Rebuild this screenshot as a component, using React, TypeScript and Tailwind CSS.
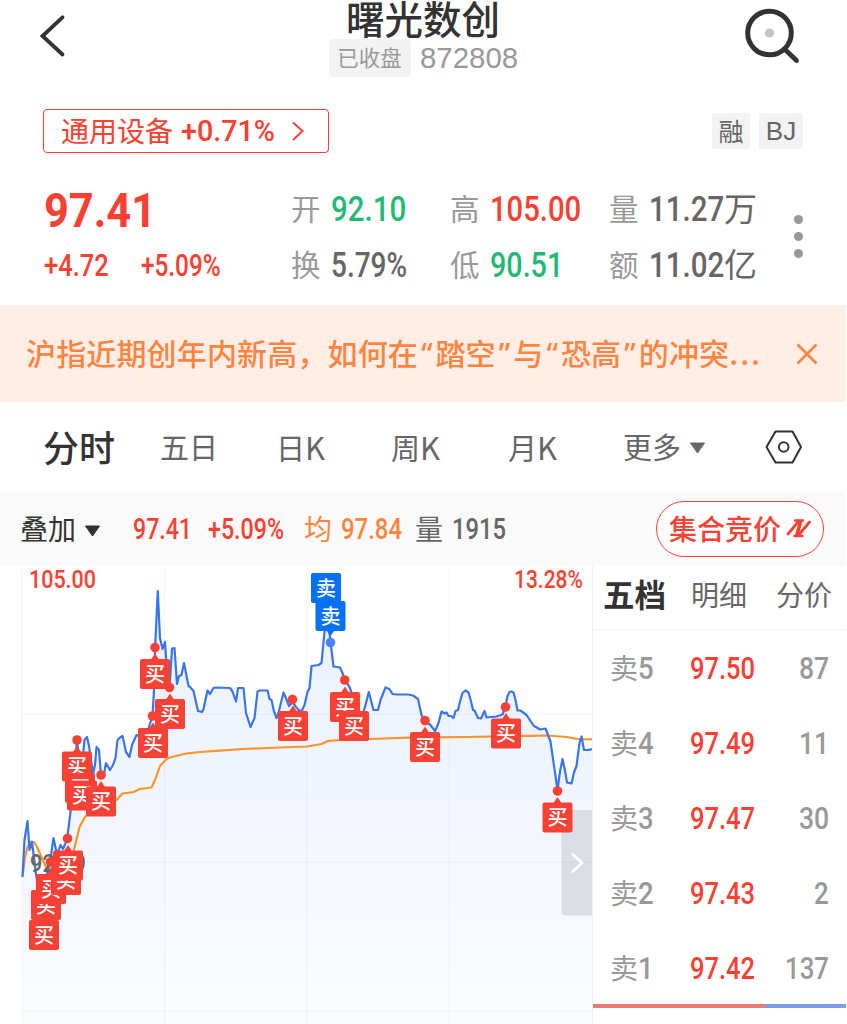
import React, {useLayoutEffect, useRef, useState} from 'react';

type FitProps = {
    w: number;
    className?: string;
    children: React.ReactNode;
};

// Squeezes a text run horizontally to the given width (condensed DIN look)
const Fit = ({w, className = '', children}: FitProps) => {
    const ref = useRef<HTMLSpanElement>(null);
    const [scale, setScale] = useState(1);

    useLayoutEffect(() => {
        if (ref.current && ref.current.offsetWidth) {
            setScale(w / ref.current.offsetWidth);
        }
    }, [w]);

    return (
        <span className={`block shrink-0 whitespace-nowrap leading-none ${className}`} style={{width: w}}>
            <span ref={ref} className="inline-block origin-left" style={{transform: `scaleX(${scale})`}}>
                {children}
            </span>
        </span>
    );
};

const Quote = ({children}: { children: React.ReactNode }) => (
    <span className="inline-block w-[17.5px] text-center font-['Noto_Sans'] leading-none tracking-normal">{children}</span>
);

const stats = [
    [
        {label: '开', value: '92.10', w: 75, color: 'text-[#1fba74]'},
        {label: '高', value: '105.00', w: 91, color: 'text-[#f94033]'},
        {label: '量', value: '11.27', unit: '万', w: 75, color: 'text-[#666666]'},
    ],
    [
        {label: '换', value: '5.79%', w: 76, color: 'text-[#666666]'},
        {label: '低', value: '90.51', w: 73, color: 'text-[#1fba74]'},
        {label: '额', value: '11.02', unit: '亿', w: 75, color: 'text-[#666666]'},
    ],
];

const asks = [
    {level: '5', price: '97.50', volume: '87', w: 30},
    {level: '4', price: '97.49', volume: '11', w: 30},
    {level: '3', price: '97.47', volume: '30', w: 30},
    {level: '2', price: '97.43', volume: '2', w: 15},
    {level: '1', price: '97.42', volume: '137', w: 44},
];

const priceLine = '22.5,877 24.5,840 27.5,821 29.5,850 32,842 34,858 36.5,878 41,892 46,878 50,862 53.5,838 56,850 58,852 60.5,845 63,849 67,840 71,808 77,740 81,775 84.5,740 87,737 89,746 93,774 95,765 96.5,747 99,750 101,776 104,774 106,763 110,770 113,765 115.5,758 117.5,740 119.5,738 122.5,736 126,752 129.5,757 132,745 136.5,735 140,736 146,736 152.5,716 154,690 155,650 157.8,591 160,638 162.5,649 165,642 166.5,665 169.5,687 171,665 172,648.5 174.5,648 177,684 179,676 181.5,675 184,663 188.5,686 190,687 193.5,691 198,711 202,712 203.5,709 207.5,690.5 210,694 213.5,688 216,687.5 230,688 232.5,691.5 236,701.5 238,688 243.5,688 246,713 250.5,727 254.5,718 257.5,691.5 260,690.5 267.5,690.5 269.5,699 271.5,700 274,711.5 276.5,718 278.5,713 283.5,692.5 285.5,697 289,706 292.5,702 296,707 299,710.5 302,710.5 304.5,705 307.5,692 309.5,688 311.5,666 318.5,665 321.5,663 324.7,630 327,612 330.5,642 333.5,666.5 340,667.5 342.5,673 344.5,680 349,686 351,691 357,712 363.5,712 366,703 368.8,692 373.5,710 378,710 380.5,700 385.5,687.5 389.5,689 392.5,694 397,694.5 408,694.5 413,695.5 418,699 421.5,715 425,721 430.5,725 435,731 438.5,723 441.5,711.5 444.5,713.5 446.5,712.5 448.5,716 451,716 453.5,718 455.5,711 458,710 460,701.5 462.5,693 465.5,690.5 468.5,692.5 471,701.5 473,710 474.5,710.5 478,718 481,718.5 484.5,711 486.5,717.5 496.5,716.5 502.5,714.5 505.5,707 507.5,696 509.5,692 511.5,691.5 513.5,692.5 515.5,700 517.5,710.5 520.5,710.5 526.5,715 533.5,725.5 540,729.5 545.5,728.5 550.5,741.5 557.5,790 560,771.5 562.5,759 564.5,768 567,782.5 571.5,783.5 574,772.5 576.5,766 579.5,743 581.5,736.5 584,750 588,750 592,749';

const avgLine = '22.5,877 25,857 27.5,847 31,841.5 34.5,842.5 37.5,848 41.5,857 45.5,866 52,870 64,868 70,862 74,850 79.5,827 85,817 95,807 108,804 116.5,800 122.5,793.5 133.5,792 140,789 151.5,787.5 155,780 160,766 166.5,759 171.5,757 186.5,753.5 200,752 220,750.7 243,749 280,747.5 307,746.5 321.5,744 328,741 340,740 370,739 410,737.7 467,737 530,735.8 547,735.5 567,737 577,739 592,739.3';

// x / y are the top left corner of the 30px tag, dot is the price point it belongs to
const buys = [
    {x: 138, y: 728, dot: [152.5, 716]},
    {x: 155, y: 699, dot: [169.5, 687.5]},
    {x: 140, y: 659, dot: [155, 647.5]},
    {x: 62, y: 751.5, dot: [77, 740]},
    {x: 65, y: 773},
    {x: 67, y: 780.5},
    {x: 86, y: 786.5, dot: [101, 775]},
    {x: 29, y: 920},
    {x: 31, y: 890},
    {x: 36, y: 874, dot: [50.5, 862]},
    {x: 51, y: 865},
    {x: 53, y: 850.5, dot: [67.5, 838.5]},
    {x: 278, y: 711, dot: [292.5, 699.5]},
    {x: 330, y: 692, dot: [344.7, 680]},
    {x: 339, y: 711},
    {x: 410, y: 732, dot: [425, 720.5]},
    {x: 491, y: 718.5, dot: [505.5, 707]},
    {x: 542.5, y: 802.5, dot: [557.5, 791]},
];

const BuyTag = ({x, y, dot}: { x: number, y: number, dot?: number[] }) => (
    <g>
        {dot && <circle cx={dot[0]} cy={dot[1]} r="4.8" fill="#f74135"/>}
        {dot && <path d={`M${x + 11} ${y + 0.5}L${x + 15} ${y - 5.5}L${x + 19} ${y + 0.5}Z`} fill="#f74135"/>}
        <rect x={x} y={y} width="30" height="30" rx="2" fill="#f74135"/>
        <text x={x + 15} y={y + 22.5} textAnchor="middle" fontSize="20" fontWeight="500" fill="#fff">买</text>
    </g>
);

const SellTag = ({x, y}: { x: number, y: number }) => (
    <g>
        <rect x={x} y={y} width="30" height="30" rx="2" fill="#0571f6"/>
        <text x={x + 15} y={y + 22.5} textAnchor="middle" fontSize="20" fontWeight="500" fill="#fff">卖</text>
    </g>
);

const Chart = () => (
    <svg className="block h-[458px] w-[592px] shrink-0" viewBox="0 566 592 458" fontFamily='"Noto Sans CJK SC", sans-serif'>
        <defs>
            <linearGradient id="area" gradientUnits="userSpaceOnUse" x1="0" y1="600" x2="0" y2="1024">
                <stop offset="0" stopColor="#edf2fd"/>
                <stop offset="0.45" stopColor="#f1f5fe"/>
                <stop offset="1" stopColor="#fbfcff"/>
            </linearGradient>
        </defs>
        <polygon points={`22.5,1024 ${priceLine} 592,1024`} fill="url(#area)"/>
        <path
            d="M22 566V1024M164.5 566V1024M307 566V1024M449.5 566V1024M22 714.3H592M22 862.3H592M22 1011.3H592"
            stroke="#8a93a8"
            strokeOpacity="0.1"
            fill="none"
        />
        <polyline points={avgLine} fill="none" stroke="#fb942b" strokeWidth="2.2" strokeLinejoin="round"/>
        <polyline points={priceLine} fill="none" stroke="#3a75f0" strokeWidth="2.2" strokeLinejoin="round"/>

        <g fontFamily="Roboto, sans-serif" fontWeight="500">
            <text x="29" y="588" fontSize="26.5" fill="#f94033" textLength="67" lengthAdjust="spacingAndGlyphs">105.00</text>
            <text x="514" y="588" fontSize="26.5" fill="#f94033" textLength="69" lengthAdjust="spacingAndGlyphs">13.28%</text>
            <text x="30" y="872" fontSize="26.5" fill="#666666" textLength="56" lengthAdjust="spacingAndGlyphs">92.69</text>
        </g>

        <path d="M592 810H565.5a4 4 0 0 0-4 4V911.5a4 4 0 0 0 4 4H592Z" fill="#000" fillOpacity="0.1"/>
        <path d="M572.8 854.5L582 863L572.8 871.5" fill="none" stroke="#fff" strokeWidth="2.8" strokeLinecap="round"/>

        {buys.map((tag, i) => <BuyTag key={i} {...tag}/>)}

        <SellTag x={311} y={573}/>
        <SellTag x={315.5} y={601}/>
        <path d="M326.5 630.5H334.5L330.5 636Z" fill="#0571f6"/>
        <circle cx="330.5" cy="642.5" r="4.8" fill="#4a80fb"/>
    </svg>
);

const Header = () => (
    <header className="flex h-[80px] shrink-0 justify-between">
        <svg className="mt-[14px] ml-[38px] h-[44px] w-[30px]" viewBox="0 0 30 44" fill="none">
            <path d="M24.5 3.3L4.5 22L24.5 40.5" stroke="#333" strokeWidth="3.8" strokeLinecap="round"/>
        </svg>
        <div className="ml-[36px] flex flex-col items-center">
            <h1 className="h-[38px] text-[38.5px] font-medium leading-[34px] text-[#333333]">曙光数创</h1>
            <div className="mt-px flex items-center">
                <span className="mr-[9px] flex h-[38px] w-[82px] items-center justify-center rounded bg-[#f3f3f3] pb-[2px] text-[21.5px] leading-none text-[#999999]">
                    已收盘
                </span>
                <Fit w={98} className="font-['Liberation_Sans'] text-[30px] text-[#999999]">872808</Fit>
            </div>
        </div>
        <svg className="mt-[7px] mr-[44px] h-[60px] w-[60px]" viewBox="0 0 60 60" fill="none">
            <circle cx="27.5" cy="26" r="21.8" stroke="#333" strokeWidth="5"/>
            <circle cx="27.5" cy="26" r="4.5" fill="#c4c4c4"/>
            <path d="M42.5 42L54.5 53.5" stroke="#333" strokeWidth="4.8" strokeLinecap="round"/>
        </svg>
    </header>
);

const App = () => {
    return (
        <div className="flex h-[1024px] w-[847px] flex-col overflow-hidden bg-white pr-px font-['Noto_Sans_CJK_SC',sans-serif]">
            <Header/>

            <div className="mt-[29px] flex h-[44px] shrink-0 items-center justify-between pr-[43px] pl-[43px]">
                <div className="flex h-[44px] w-[286px] items-center rounded-sm border-[1.5px] border-[#f94033] pl-[17px] text-[#f94033]">
                    <span className="mb-[2px] w-[120px] text-[28px] leading-none">通用设备</span>
                    <Fit w={94} className="mt-px font-['Roboto'] text-[29px] font-medium">+0.71%</Fit>
                    <svg className="ml-[16px] h-[22px] w-[14px]" viewBox="0 0 14 22" fill="none">
                        <path d="M2 2.5L11.5 11L2 20" stroke="#f94033" strokeWidth="2"/>
                    </svg>
                </div>
                <div className="flex gap-[9px] text-[#666666]">
                    <span className="flex h-[36px] w-[38px] items-center justify-center rounded-xs bg-[#f3f3f3] pb-[2px] text-[25px] leading-none">融</span>
                    <span className="flex h-[36px] w-[44px] items-center justify-center rounded-xs bg-[#f3f3f3] font-['Liberation_Sans'] text-[26px] leading-none">BJ</span>
                </div>
            </div>

            <div className="flex h-[152px] shrink-0 pt-[28px] pl-[44px]">
                <div className="flex w-[247px] flex-col font-['Roboto'] text-[#f94033]">
                    <div className="flex h-[58px] items-center pt-[2px]">
                        <Fit w={112} className="text-[48px] font-bold">97.41</Fit>
                    </div>
                    <div className="flex h-[54px] items-center gap-[32px] pb-[2px] text-[31px] font-medium">
                        <Fit w={65}>+4.72</Fit>
                        <Fit w={80}>+5.09%</Fit>
                    </div>
                </div>
                <div className="flex flex-col">
                    {stats.map((row, i) => (
                        <div key={i} className="flex h-[56px]">
                            {row.map((item) => (
                                <div key={item.label} className="flex w-[159px] items-center">
                                    <span className="mb-[3px] w-[40px] text-[29.5px] leading-none text-[#999999]">{item.label}</span>
                                    <Fit w={item.w} className={`font-['Roboto'] text-[35px] font-medium ${item.color}`}>{item.value}</Fit>
                                    {item.unit && <span className="mb-[3px] text-[33px] leading-none text-[#666666]">{item.unit}</span>}
                                </div>
                            ))}
                        </div>
                    ))}
                </div>
                <div className="mt-[34px] ml-[25.5px] flex flex-col gap-[8px]">
                    <i className="size-[9px] rounded-full bg-[#999999]"/>
                    <i className="size-[9px] rounded-full bg-[#999999]"/>
                    <i className="size-[9px] rounded-full bg-[#999999]"/>
                </div>
            </div>

            <div className="flex h-[97px] shrink-0 items-center justify-between bg-[#ffeee6] pr-[28px] pl-[26px]">
                <p className="mb-[2px] text-[30px] font-medium leading-none tracking-[0.15px] whitespace-nowrap text-[#ff8440]">
                    沪指近期创年内新高，如何在<Quote>“</Quote>踏空<Quote>”</Quote>与<Quote>“</Quote>恐高<Quote>”</Quote>的冲突<span className="tracking-[2px]">...</span>
                </p>
                <svg className="h-[22px] w-[22px] shrink-0" viewBox="0 0 22 22" fill="none">
                    <path d="M1.5 1.5L20.5 20.5M20.5 1.5L1.5 20.5" stroke="#ff8440" strokeWidth="2.6"/>
                </svg>
            </div>

            <nav className="flex h-[90px] shrink-0 items-center pb-[2px] pl-[43px] text-[29px] leading-none text-[#666666]">
                <span className="mb-px w-[117px] text-[36px] font-medium text-[#333333]">分时</span>
                <span className="w-[116px]">五日</span>
                <span className="w-[115px]">日<span className="text-[31px]">K</span></span>
                <span className="w-[117px]">周<span className="text-[31px]">K</span></span>
                <span className="w-[115px]">月<span className="text-[31px]">K</span></span>
                <span className="w-[66px]">更多</span>
                <svg className="mt-[4px] h-[12px] w-[18px]" viewBox="0 0 18 12">
                    <path d="M1.5 1H15.5L8.5 11Z" fill="#666" stroke="#666" strokeLinejoin="round"/>
                </svg>
                <svg className="mt-[2px] ml-[57px] h-[36px] w-[40px]" viewBox="0 0 40 36" fill="none" stroke="#333" strokeWidth="2">
                    <path d="M11.5 2.5H28.5L37 18L28.5 33.5H11.5L2.5 18Z" strokeLinejoin="round"/>
                    <circle cx="19.7" cy="18" r="4.8"/>
                </svg>
            </nav>

            <div className="flex h-[74px] shrink-0 items-center bg-[#fafafa] pl-[20px] text-[28px] leading-none">
                <span className="mb-[2px] w-[64px] text-[#333333]">叠加</span>
                <svg className="mt-[3px] mr-[32px] h-[12px] w-[17px]" viewBox="0 0 17 12">
                    <path d="M1.5 1H15.5L8.5 11Z" fill="#333" stroke="#333" strokeLinejoin="round"/>
                </svg>
                <Fit w={59} className="mt-px mr-[16px] font-['Roboto'] text-[29px] font-medium text-[#f94033]">97.41</Fit>
                <Fit w={76} className="mt-px mr-[20px] font-['Roboto'] text-[29px] font-medium text-[#f94033]">+5.09%</Fit>
                <span className="mb-[2px] w-[37px] text-[#ff8440]">均</span>
                <Fit w={61} className="mt-px mr-[13px] font-['Roboto'] text-[29px] font-medium text-[#ff8440]">97.84</Fit>
                <span className="mb-[2px] w-[37px] text-[#666666]">量</span>
                <Fit w={54} className="mt-px font-['Roboto'] text-[29px] font-medium text-[#666666]">1915</Fit>
                <button className="mr-[22px] ml-auto flex h-[56px] w-[168px] items-center justify-center rounded-full border border-[#f94033] bg-white pb-[2px] font-medium text-[#f94033]">
                    集合竞价
                    <svg className="ml-[5px] h-[20px] w-[25px]" viewBox="0 0 25 20" fill="none" stroke="#f94033" strokeLinecap="round">
                        <path d="M2 16L12 4M13.5 16L23.5 4" strokeWidth="2.8"/>
                        <path d="M9 2.5H17M8.5 18H16.5" strokeWidth="2.4"/>
                        <path d="M14.5 4L11 16.5" strokeWidth="3.6"/>
                    </svg>
                </button>
            </div>

            <div className="flex h-[458px] shrink-0">
                <Chart/>
                <div className="flex w-[254px] flex-col border-l border-[#f0f0f2]">
                    <div className="flex h-[64px] shrink-0 items-center border-b border-[#f2f2f2] pb-[7px] pl-[10px] text-[28px] leading-none text-[#666666]">
                        <span className="mb-px w-[88px] text-[31.5px] font-bold text-[#333333]">五档</span>
                        <span className="w-[85px]">明细</span>
                        <span>分价</span>
                    </div>
                    <div className="flex h-[374px] flex-col">
                        {asks.map((row) => (
                            <div key={row.level} className="flex h-[75px] shrink-0 items-center pt-px pl-[17px] text-[#999999]">
                                <span className="mb-[2px] w-[28px] text-[28px] leading-none">卖</span>
                                <Fit w={16} className="mr-[36px] font-['Roboto'] text-[31px] font-medium">{row.level}</Fit>
                                <Fit w={65} className="font-['Roboto'] text-[31px] font-medium text-[#f94033]">{row.price}</Fit>
                                <Fit w={row.w} className="mr-[17px] ml-auto font-['Roboto'] text-[31px] font-medium">{row.volume}</Fit>
                            </div>
                        ))}
                    </div>
                    <div className="flex h-[4px]">
                        <div className="w-[172px] bg-[#ea7b71]"/>
                        <div className="flex-1 bg-[#7c9eea]"/>
                    </div>
                </div>
            </div>
        </div>
    );
};

export default App;
